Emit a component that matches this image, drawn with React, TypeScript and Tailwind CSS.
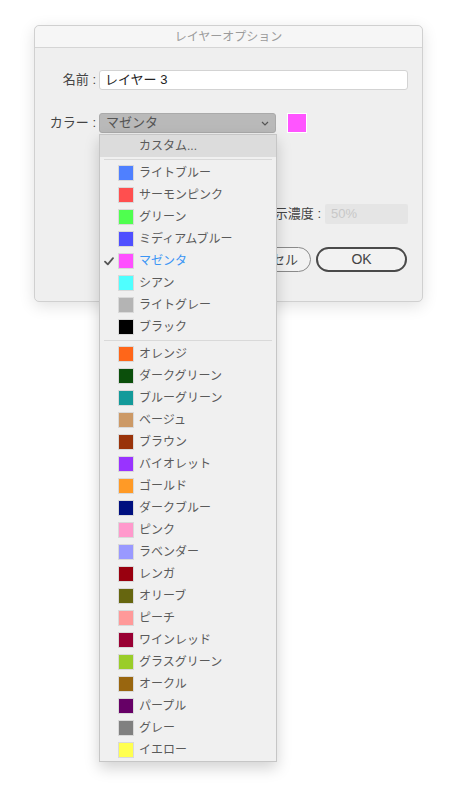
import React from 'react'

const font = { fontFamily: '"Liberation Sans", "Noto Sans CJK JP", sans-serif' }

const groupA = [
  { label: 'ライトブルー', color: '#4f80ff' },
  { label: 'サーモンピンク', color: '#ff4f4f' },
  { label: 'グリーン', color: '#4fff4f' },
  { label: 'ミディアムブルー', color: '#4f4fff' },
  { label: 'マゼンタ', color: '#ff4fff', selected: true },
  { label: 'シアン', color: '#4fffff' },
  { label: 'ライトグレー', color: '#b4b4b4' },
  { label: 'ブラック', color: '#000000' },
]

const groupB = [
  { label: 'オレンジ', color: '#ff6619' },
  { label: 'ダークグリーン', color: '#0b4f0b' },
  { label: 'ブルーグリーン', color: '#139a9a' },
  { label: 'ベージュ', color: '#cc9966' },
  { label: 'ブラウン', color: '#99330a' },
  { label: 'バイオレット', color: '#9933ff' },
  { label: 'ゴールド', color: '#ff9a26' },
  { label: 'ダークブルー', color: '#00107f' },
  { label: 'ピンク', color: '#ff99cc' },
  { label: 'ラベンダー', color: '#9999ff' },
  { label: 'レンガ', color: '#99000f' },
  { label: 'オリーブ', color: '#66660f' },
  { label: 'ピーチ', color: '#ff9999' },
  { label: 'ワインレッド', color: '#990033' },
  { label: 'グラスグリーン', color: '#9acd2a' },
  { label: 'オークル', color: '#99660f' },
  { label: 'パープル', color: '#660066' },
  { label: 'グレー', color: '#808080' },
  { label: 'イエロー', color: '#ffff4f' },
]

type Item = { label: string; color: string; selected?: boolean }

const MenuItem = ({ item }: { item: Item }) => (
  <div className="relative flex h-[22px] items-center pl-[18px]">
    {item.selected && (
      <svg className="absolute left-[4px] top-[7px]" width="10" height="9" viewBox="0 0 10 9">
        <path d="M1 4.6 L3.8 7.4 L9 1.2" fill="none" stroke="#555" strokeWidth="1.8" strokeLinecap="round" strokeLinejoin="round" />
      </svg>
    )}
    {/* swatch */}
    <span className="h-[16px] w-[16px] border border-[#d9d9d9]" style={{ background: item.color }} />
    <span className={`ml-[5px] text-[12px] ${item.selected ? 'text-[#3b95f5]' : 'text-[#5a5a5a]'}`}>{item.label}</span>
  </div>
)

const Separator = () => (
  <div className="flex h-[5px] items-center px-[4px]">
    <div className="h-px w-full bg-[#d9d9d9]" />
  </div>
)

export default function App() {
  return (
    <div className="min-h-screen bg-white pt-[25px]" style={font}>
      <div className="ml-[34px] h-[277px] w-[389px] rounded-[5px] border border-[#d0d0d0] bg-[#efefef] shadow-[0_4px_16px_rgba(0,0,0,0.12)]">
        {/* title bar */}
        <div className="flex h-[22px] items-center justify-center rounded-t-[5px] border-b border-[#d5d5d5] bg-[#f6f6f6] text-[12px] text-[#9b9b9b]">
          レイヤーオプション
        </div>

        <div className="pt-[22px]">
          {/* name */}
          <div className="flex h-[20px] items-center">
            <span className="w-[61px] text-right text-[13px] text-[#444]">名前 :</span>
            <div className="ml-[3px] flex h-[20px] w-[309px] items-center rounded-[3px] border border-[#d3d3d3] bg-white px-[5px] text-[13px] text-[#222]">
              レイヤー 3
            </div>
          </div>

          {/* color */}
          <div className="mt-[23px] flex h-[20px] items-center">
            <span className="w-[61px] text-right text-[13px] text-[#444]">カラー :</span>
            <div className="relative ml-[3px] w-[177px]">
              <div className="flex h-[20px] items-center justify-between rounded-[3px] border border-[#aaaaaa] bg-[#b9b9b9] pl-[6px] pr-[6px] text-[13px] text-[#555]">
                <span>マゼンタ</span>
                <svg width="8" height="5" viewBox="0 0 8 5">
                  <path d="M1 1 L4 4 L7 1" fill="none" stroke="#555" strokeWidth="1.2" />
                </svg>
              </div>

              {/* dropdown menu */}
              <div className="absolute left-0 top-full z-10 mt-px w-[178px] border border-[#c6c6c6] bg-[#f0f0f0] shadow-[0_6px_14px_rgba(0,0,0,0.18)]">
                <div className="flex h-[22px] items-center bg-[#dcdcdc] pl-[39px] text-[12px] text-[#5a5a5a]">カスタム...</div>
                <Separator />
                {groupA.map((item) => (
                  <MenuItem key={item.label} item={item} />
                ))}
                <Separator />
                {groupB.map((item) => (
                  <MenuItem key={item.label} item={item} />
                ))}
              </div>
            </div>
            <span className="ml-[11px] h-[20px] w-[20px] border border-white bg-[#ff55ff]" />
          </div>

          {/* opacity */}
          <div className="mt-[71px] flex h-[20px] items-center justify-end pr-[14px]">
            <span className="text-[13px] text-[#444]">画像の表示濃度 :</span>
            <div className="ml-[4px] flex h-[20px] w-[83px] items-center rounded-[2px] bg-[#e5e5e5] px-[6px] text-[13px] text-[#c8c8c8]">
              50%
            </div>
          </div>

          {/* buttons */}
          <div className="mt-[23px] flex h-[25px] items-center justify-end gap-[5px] pr-[15px]">
            <button className="flex h-[25px] w-[91px] items-center justify-center rounded-full border border-[#8a8a8a] bg-[#f2f2f2] text-[13px] text-[#444]">
              キャンセル
            </button>
            <button className="flex h-[25px] w-[91px] items-center justify-center rounded-full border-2 border-[#4a4a4a] bg-[#f2f2f2] text-[14px] text-[#444]">
              OK
            </button>
          </div>
        </div>
      </div>
    </div>
  )
}
